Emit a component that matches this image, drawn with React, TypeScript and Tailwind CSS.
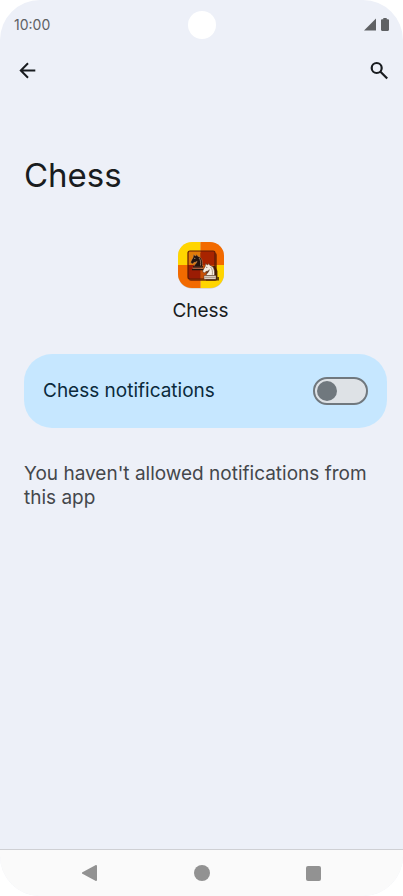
import { useState } from "react";

function StatusBar() {
  return (
    <div className="relative flex h-12 items-center justify-between px-3.5 pt-0.5 text-[#5f6164]">
      <span className="text-sm leading-5">10:00</span>
      <span className="absolute top-[11px] left-1/2 size-7 -translate-x-1/2 rounded-full bg-white" />
      <div className="flex items-center gap-1">
        <svg className="h-3.5 w-3.5" viewBox="0 0 14 14" fill="currentColor" aria-hidden>
          <path d="M13 0.500v12H1z" />
        </svg>
        <svg className="h-3.5 w-2" viewBox="0 0 8 14" fill="currentColor" aria-hidden>
          <path d="M2.300 0h3.400v1.300h1.100C7.500 1.300 8 1.800 8 2.500v9.300c0 .7-.5 1.200-1.200 1.200H1.200C.5 13 0 12.500 0 11.800V2.500c0-.7.5-1.200 1.200-1.200h1.100z" />
        </svg>
      </div>
    </div>
  );
}

const KNIGHT_BODY =
  "M4 12.500c.2-2 2.600-3 3.100-5.200-1.100 1-2.300 1-3.200 1.200L2.600 10 .7 8.700c.2-2.400 1.600-3.500 2.400-5.300L3.600.5l1.900 1.500L6.900.6l.9 1.700c3.800.9 5.200 4.500 4.700 10.200z";

/** Launcher icon: checkered tile, small board and two knights. */
function AppIcon() {
  return (
    <svg className="size-12" viewBox="0 0 48 48" aria-hidden>
      <defs>
        <clipPath id="tile">
          <rect x="1" y="1" width="46" height="46" rx="14" />
        </clipPath>
        <clipPath id="board">
          <rect x="11" y="10" width="27" height="28" rx="2" />
        </clipPath>
      </defs>
      <rect x="1" y="1.500" width="46" height="46" rx="14" fill="#c9c4b8" />
      <g clipPath="url(#tile)">
        <path fill="#ffd500" d="M0 0h23.500v24H0zM23.500 24H48v24H23.500z" />
        <path fill="#f26a00" d="M23.500 0H48v24H23.500zM0 24h23.500v24H0z" />
      </g>
      <rect x="12" y="12" width="28" height="28" rx="2" fill="#5a1500" opacity="0.65" />
      <g clipPath="url(#board)">
        <path fill="#e07b08" d="M10 9h13.500v15H10z" />
        <path fill="#a82400" d="M23.500 9H39v15H23.500z" />
        <path fill="#9b1c04" d="M10 24h13.500v15H10z" />
        <path fill="#c95006" d="M23.500 24H39v15H23.500z" />
      </g>
      <rect x="11" y="10" width="27" height="28" rx="2" fill="none" stroke="#5e1a06" strokeWidth="1.200" />

      <g transform="translate(13 13)">
        <path d={KNIGHT_BODY} fill="#21140f" stroke="#c98f5e" strokeWidth="0.500" />
        <path d="M9 4c1.600 1.600 2 4.400 1.500 7.500" fill="none" stroke="#c9a283" strokeWidth="0.700" />
        <path d="M3 13h10M2 15.500h12" stroke="#21140f" strokeWidth="1.600" />
        <path d="M2.500 14.200h11" stroke="#d9a77c" strokeWidth="0.700" />
        <circle cx="4.800" cy="4.300" r="0.500" fill="#e9c9a8" />
      </g>

      <g transform="translate(25 22)">
        <path d="M5 3h8l2.500 5v6H17v3.500H4z" fill="#2d1206" opacity="0.750" />
        <path d={KNIGHT_BODY} fill="#f7efe2" stroke="#51301d" strokeWidth="0.600" />
        <path d="M8.500 4c1.800 1.700 2.200 4.500 1.800 7.800M6 8.500c.8-.6 1.300-1.400 1.400-2.300" fill="none" stroke="#8b7460" strokeWidth="0.700" />
        <path d="M2 12.500h12v3.700H2z" fill="#f7efe2" stroke="#51301d" strokeWidth="0.500" />
        <path d="M2.500 14.200h11" stroke="#6e503a" strokeWidth="0.700" />
        <circle cx="4.800" cy="4.300" r="0.500" fill="#3b2416" />
      </g>
    </svg>
  );
}

function NotificationSwitch() {
  const [allowed, setAllowed] = useState(false);

  return (
    <label className="flex h-[74px] items-center justify-between rounded-[28px] bg-[#c6e7ff] px-[19px] text-[#0b2a3c]">
      <span className="text-[19px] leading-6">Chess notifications</span>
      <input
        type="checkbox"
        role="switch"
        checked={allowed}
        onChange={(e) => setAllowed(e.target.checked)}
        className="flex h-7 w-[55px] appearance-none items-center rounded-full border-2 border-[#70787e] bg-[#dee2e6] px-0.5 before:size-5 before:rounded-full before:bg-[#70787e] checked:justify-end checked:bg-white"
      />
    </label>
  );
}

function SystemNav() {
  return (
    <nav className="flex h-[47px] items-center justify-center gap-24 border-t border-[#cfd0d4] bg-[#fafafa] text-[#929292]">
      <button type="button" aria-label="Back">
        <svg className="size-4" viewBox="0 0 16 16" fill="currentColor" aria-hidden>
          <path d="M15 1v14c0 .9-.8 1.200-1.600.8L.4 8.800c-.8-.4-.8-1.200 0-1.600l13-7c.8-.4 1.600-.1 1.600.8z" />
        </svg>
      </button>
      <button type="button" aria-label="Home" className="size-4 rounded-full bg-current" />
      <button type="button" aria-label="Recent apps" className="size-[15px] rounded-[2px] bg-current" />
    </nav>
  );
}

export default function App() {
  return (
    <div className="min-h-screen bg-white font-['Inter',sans-serif]">
      <div className="flex min-h-screen flex-col overflow-hidden rounded-[40px] bg-[#edf0f8] text-[#191c20]">
        <StatusBar />
        <header className="flex h-12 items-center justify-between px-3">
          <button type="button" aria-label="Navigate up" className="p-1">
            <svg className="size-6" viewBox="0 0 24 24" fill="none" stroke="currentColor" strokeWidth="2" aria-hidden>
              <path d="M19.300 10.500H5M12 3.300l-7.200 7.200 7.200 7.200" />
            </svg>
          </button>
          <button type="button" aria-label="Search">
            <svg className="size-6" viewBox="0 0 24 24" fill="none" stroke="currentColor" strokeWidth="2.200" aria-hidden>
              <circle cx="9.700" cy="8" r="5" />
              <path d="M13.200 11.500l7 7" />
            </svg>
          </button>
        </header>

        <main className="flex-1 pt-[57px] pr-4 pl-6">
          <h1 className="text-[33px] leading-11">Chess</h1>
          <div className="mt-11 flex flex-col items-center pr-2.5">
            <AppIcon />
            <h2 className="mt-2 text-[19px] leading-7">Chess</h2>
          </div>
          <div className="mt-[29px]">
            <NotificationSwitch />
          </div>
          <p className="mt-[34px] text-[19px] leading-6 text-[#44474b]">
            You haven't allowed notifications from this app
          </p>
        </main>

        <SystemNav />
      </div>
    </div>
  );
}
